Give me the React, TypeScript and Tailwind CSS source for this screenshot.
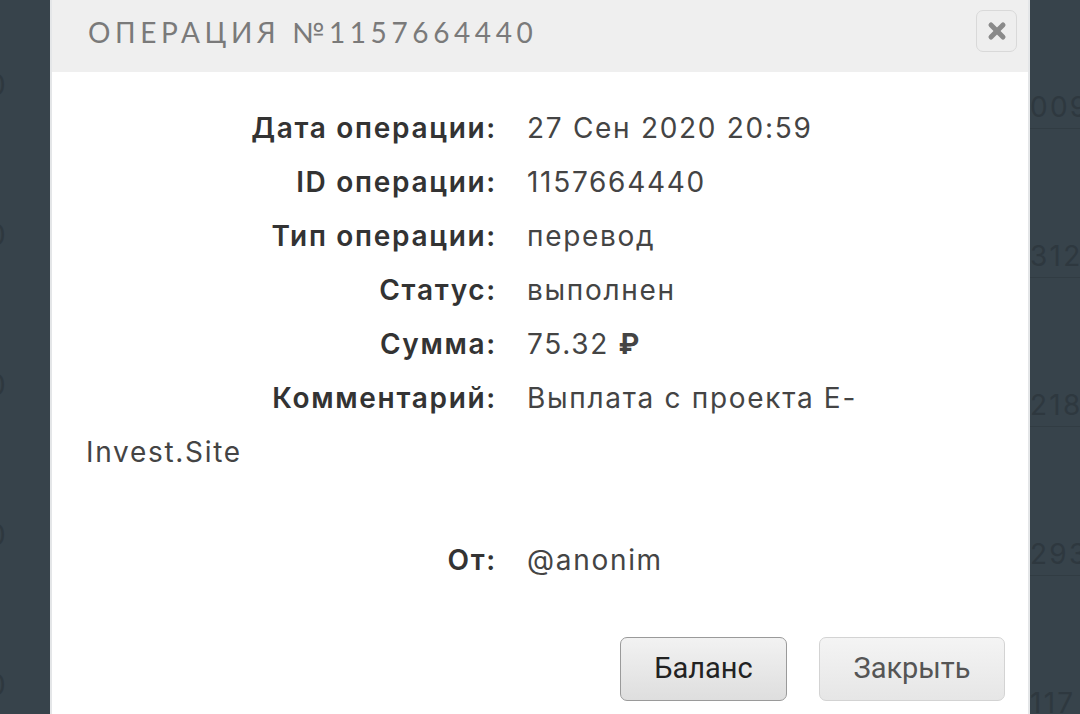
import { X } from 'lucide-react'

const rows: { label: string; value: React.ReactNode }[] = [
  { label: 'Дата операции:', value: '27 Сен 2020 20:59' },
  { label: 'ID операции:', value: '1157664440' },
  { label: 'Тип операции:', value: 'перевод' },
  { label: 'Статус:', value: 'выполнен' },
  { label: 'Сумма:', value: <>75.32 <span className="font-bold">₽</span></> },
  { label: 'Комментарий:', value: <>Выплата с проекта E-<wbr />Invest.Site</> },
]

const leftMarks = ['0', '0', '0', '0', '0']
const rightMarks = ['009', '3124', '218', '293', '117']

function Row({ label, value }: { label: string; value: React.ReactNode }) {
  return (
    <div>
      <span className="mr-[30px] inline-block w-[411px] text-right font-semibold text-[#333]">
        {label}
      </span>
      <span className="text-[#444]">{value}</span>
    </div>
  )
}

export default function App() {
  return (
    <div className="flex h-[714px] w-[1080px] overflow-hidden bg-[#37434b] font-['Inter','Noto_Sans',sans-serif]">
      <div className="flex w-[50px] shrink-0 flex-col overflow-hidden pt-[64px]">
        {leftMarks.map((m, i) => (
          <div key={i} className="-ml-[12px] h-[150px] shrink-0 text-[28px] leading-[42px] text-[#2e383f]">
            {m}
          </div>
        ))}
      </div>

      <div className="flex w-[980px] shrink-0 flex-col border-x-2 border-[#e4e6e8] bg-white">
        <div className="flex h-[72px] items-center justify-between bg-[#efefef] pb-[8px] pl-[36px] pr-[11px]">
          <h1 className="text-[28px] tracking-[4.6px] text-[#7a7a7a] font-['Lato','Noto_Sans',sans-serif]">
            ОПЕРАЦИЯ №1157664440
          </h1>
          <button className="mt-[10px] flex h-[42px] w-[41px] self-start items-center justify-center rounded-[7px] border border-[#d9d9d9] bg-[#eeeeee]">
            <X size={24} strokeWidth={5} className="text-[#8a8a8a]" />
          </button>
        </div>

        <div className="px-[34px] pt-[29px] text-[28px] leading-[54px] tracking-[1.7px]">
          {rows.map((r) => (
            <Row key={r.label} label={r.label} value={r.value} />
          ))}
          <div className="h-[54px]" />
          <Row label="От:" value="@anonim" />
        </div>

        <div className="mt-[50px] flex justify-end gap-[32px] pr-[23px] font-['Roboto',sans-serif] text-[29px]">
          <button className="h-[64px] w-[167px] shrink-0 rounded-[7px] border border-[#9a9a9a] bg-gradient-to-b from-[#f2f2f2] to-[#dedede] text-[#222]">
            Баланс
          </button>
          <button className="h-[64px] w-[186px] shrink-0 rounded-[7px] border border-[#d3d3d3] bg-gradient-to-b from-[#f4f4f4] to-[#e6e6e6] text-[#555]">
            Закрыть
          </button>
        </div>
      </div>

      <div className="flex w-[50px] shrink-0 flex-col overflow-hidden pt-[86px]">
        {rightMarks.map((m, i) => (
          <div key={i} className="h-[149px] shrink-0 whitespace-nowrap">
            <div className="border-b border-[#313c43] text-[28px] leading-[42px] tracking-[0.08em] text-[#2e383f]">
              {m}
            </div>
          </div>
        ))}
      </div>
    </div>
  )
}
